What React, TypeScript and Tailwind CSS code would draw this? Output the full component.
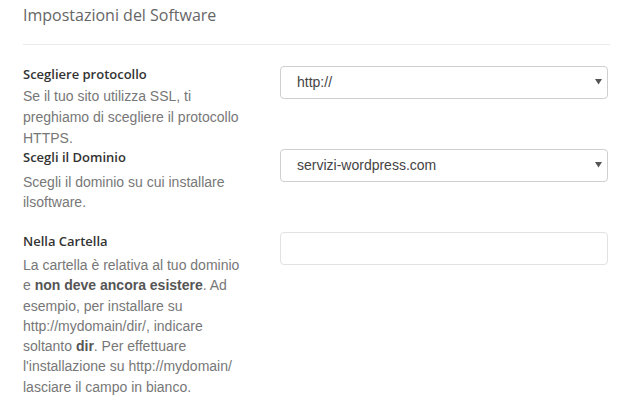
import React from 'react';

const label = "font-['Open_Sans',sans-serif] text-[13px] font-semibold leading-[17px] text-[#333]";
const help = "font-['Liberation_Sans',Arial,sans-serif] text-[14px] text-[#777]";

const SelectBox: React.FC<{ value: string }> = ({ value }) => (
  <div className="relative h-[33px] w-[328px]">
    <select
      defaultValue={value}
      className="h-full w-full appearance-none rounded-[4px] border border-[#cfcfcf] bg-white pl-[16px] pr-8 font-['Liberation_Sans',Arial,sans-serif] text-[14px] text-[#444] outline-none"
    >
      <option value={value}>{value}</option>
    </select>
    {/* dropdown caret */}
    <svg className="pointer-events-none absolute right-[6px] top-[13px]" width="7" height="6" viewBox="0 0 7 6">
      <path d="M0 0 H7 L3.5 5.5 Z" fill="#555" />
    </svg>
  </div>
);

export default function App() {
  return (
    <div className="min-h-screen bg-white px-[23px] pt-[4px]">
      <div className="w-[587px]">
        {/* Section title */}
        <h2 className="font-['Open_Sans',sans-serif] text-[16px] leading-[22px] text-[#666]">
          Impostazioni del Software
        </h2>
        <div className="mt-[18px] h-px bg-[#eaeaea]" />

        {/* Protocol */}
        <div className="mt-[21px] flex gap-[33px]">
          <div className="w-[224px]">
            <div className={label}>Scegliere protocollo</div>
            <p className={`${help} mt-[3px] leading-[21px]`}>
              Se il tuo sito utilizza SSL, ti preghiamo di scegliere il protocollo HTTPS.
            </p>
          </div>
          <SelectBox value="http://" />
        </div>

        {/* Domain */}
        <div className="flex gap-[33px]">
          <div className="w-[224px]">
            <div className={label}>Scegli il Dominio</div>
            <p className={`${help} mt-[6px] leading-[20px]`}>
              Scegli il dominio su cui installare ilsoftware.
            </p>
          </div>
          <SelectBox value="servizi-wordpress.com" />
        </div>

        {/* Folder */}
        <div className="mt-[20px] flex gap-[33px]">
          <div className="w-[224px]">
            <div className={`${label} mt-px`}>Nella Cartella</div>
            <p className={`${help} mt-[5px] leading-[20.3px]`}>
              La cartella è relativa al tuo dominio e <b className="text-[#555]">non deve ancora esistere</b>. Ad
              esempio, per installare su http://mydomain/dir/, indicare soltanto{' '}
              <b className="text-[#555]">dir</b>. Per effettuare l'installazione su http://mydomain/ lasciare il
              campo in bianco.
            </p>
          </div>
          <input
            type="text"
            className="h-[33px] w-[328px] rounded-[4px] border border-[#e2e2e2] bg-white px-3 font-['Liberation_Sans',Arial,sans-serif] text-[14px] outline-none"
          />
        </div>
      </div>
    </div>
  );
}
